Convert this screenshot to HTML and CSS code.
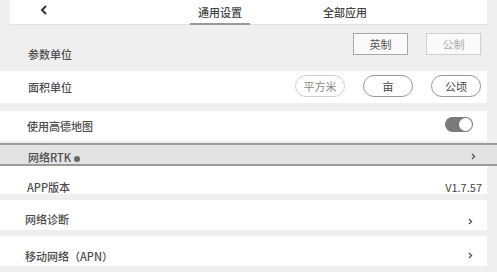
FILE: index.html
```html
<!DOCTYPE html>
<html lang="zh-CN">
<head>
    <meta charset="UTF-8" />
    <meta name="viewport" content="width=device-width, initial-scale=1" />
    <title>通用设置</title>
    <link rel="stylesheet" href="styles.css">
</head>
<body>
    <div class="topbar">
        <span class="back">
            <svg width="8" height="10" viewBox="0 0 8 10"><path d="M6 1 L2 5 L6 9" fill="none" stroke="#333" stroke-width="2"/></svg>
        </span>
        <div class="tabs">
            <span class="tab active">通用设置</span>
            <span class="tab">全部应用</span>
        </div>
    </div>

    <div class="row row-units">
        <span class="label">参数单位</span>
        <div class="btns">
            <span class="box on">英制</span>
            <span class="box off">公制</span>
        </div>
    </div>

    <div class="row row-area">
        <span class="label">面积单位</span>
        <div class="btns">
            <span class="pill off">平方米</span>
            <span class="pill">亩</span>
            <span class="pill">公顷</span>
        </div>
    </div>

    <div class="row row-map">
        <span class="label">使用高德地图</span>
        <span class="toggle"><span class="knob"></span></span>
    </div>

    <div class="row row-rtk">
        <span class="label">网络RTK<span class="dot"></span></span>
        <span class="chev"><svg width="5" height="7" viewBox="0 0 5 7"><path d="M1 1 L3.5 3.5 L1 6" fill="none" stroke="#555" stroke-width="1.4"/></svg></span>
    </div>

    <div class="row row-ver">
        <span class="label">APP版本</span>
        <span class="ver">V1.7.57</span>
    </div>

    <div class="row row-diag">
        <span class="label">网络诊断</span>
        <span class="chev"><svg width="5" height="7" viewBox="0 0 5 7"><path d="M1 1 L3.5 3.5 L1 6" fill="none" stroke="#555" stroke-width="1.4"/></svg></span>
    </div>

    <div class="row row-apn">
        <span class="label">移动网络（APN）</span>
        <span class="chev"><svg width="5" height="7" viewBox="0 0 5 7"><path d="M1 1 L3.5 3.5 L1 6" fill="none" stroke="#555" stroke-width="1.4"/></svg></span>
    </div>
</body>
</html>
```

FILE: styles.css
```css
body {
    margin: 0;
    width: 497px;
    height: 272px;
    overflow: hidden;
    background: #efefef;
    font-family: "Noto Sans CJK SC", "Noto Sans", sans-serif;
    font-size: 11px;
    color: #4d4d4d;
}
.topbar {
    height: 24px;
    margin: 0 10px;
    background: #fff;
    border-bottom: 1px solid #e0e0e0;
    display: flex;
    align-items: center;
}
.back {
    display: flex;
    margin-left: 30px;
    margin-top: -4px;
}
.tabs {
    display: flex;
    gap: 65px;
    margin-left: 142px;
    height: 100%;
}
.tab {
    width: 60px;
    text-align: center;
    line-height: 24px;
    color: #444;
    font-weight: 500;
}
.tab.active {
    border-bottom: 2px solid #999;
    height: 23px;
}
.row {
    display: flex;
    align-items: center;
    justify-content: space-between;
    margin-right: 10px;
    background: #fff;
    padding: 0 14px 0 27px;
}
.label {
    display: flex;
    align-items: center;
    font-weight: 500;
}
.row-units {
    background: transparent;
    height: 38px;
    align-items: flex-start;
    padding-right: 6px;
}
.row-units .label {
    margin-top: 21px;
    margin-left: 1px;
}
.btns {
    display: flex;
}
.box {
    width: 53px;
    height: 20px;
    line-height: 20px;
    text-align: center;
    border: 1px solid #a8a8a8;
    background: #fafafa;
    margin-top: 8px;
    margin-left: 18px;
    color: #555;
}
.box.off {
    border-color: #cfcfcf;
    color: #aaa;
}
.row-area {
    margin-top: 8px;
    height: 32px;
    padding-right: 6px;
}
.row-area .label {
    margin-left: 1px;
}
.pill {
    width: 48px;
    height: 20px;
    line-height: 20px;
    text-align: center;
    border: 1px solid #999;
    border-radius: 11px;
    margin-left: 18px;
    margin-top: -3px;
    color: #444;
}
.pill.off {
    border-color: #d0d0d0;
    color: #888;
}
.row-map {
    margin-top: 8px;
    height: 30px;
    padding-right: 14px;
}
.toggle {
    width: 28px;
    height: 15px;
    border-radius: 8px;
    background: #7a7a7a;
    display: flex;
    justify-content: flex-end;
    align-items: center;
    margin-top: -3px;
}
.knob {
    width: 13px;
    height: 13px;
    border-radius: 50%;
    background: #fff;
    margin-right: 1px;
}
.row-rtk {
    margin-top: 2px;
    margin-right: 0;
    height: 19px;
    background: #e3e3e3;
    border-top: 2px solid #9a9a9a;
    border-bottom: 2px solid #9a9a9a;
    padding: 0 21px 0 28px;
}
.row-rtk .label,
.row-rtk .chev {
    margin-top: 4px;
}
.dot {
    width: 6px;
    height: 6px;
    border-radius: 50%;
    background: #666;
    margin-left: 3px;
    margin-top: 4px;
}
.chev {
    display: flex;
}
.row-ver {
    height: 28px;
    padding-right: 5px;
}
.row-ver .label,
.ver {
    margin-top: 14px;
}
.ver {
    color: #444;
}
.row-diag {
    margin-top: 6px;
    height: 30px;
    padding-left: 25px;
}
.row-diag .label {
    margin-top: 8px;
}
.row-diag .chev {
    margin-top: 12px;
}
.row-apn {
    margin-top: 6px;
    height: 30px;
    padding-left: 25px;
}
.row-apn .label {
    margin-top: 10px;
}
.row-apn .chev {
    margin-top: 8px;
}
```
